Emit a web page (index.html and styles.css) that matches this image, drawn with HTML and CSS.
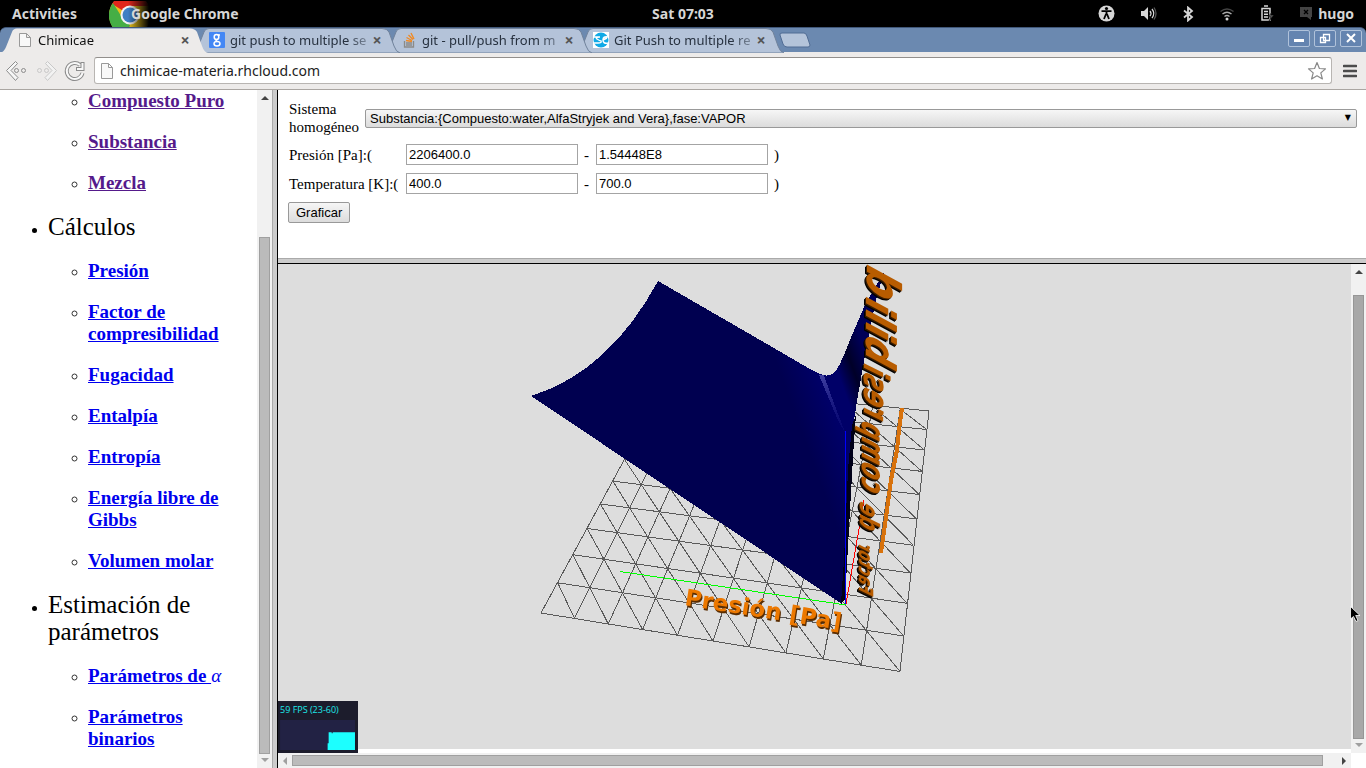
FILE: index.html
```html
<!DOCTYPE html>
<html lang="es">
<head>
<meta charset="utf-8">
<title>Chimicae</title>
<link rel="stylesheet" href="styles.css">
</head>
<body>
<header class="topbar">
  <div class="topbar-left">
    <button class="plain activities">Activities</button>
    <button class="plain app-menu">
      <svg class="app-logo" width="42" height="26" viewBox="0 0 42 26" aria-hidden="true">
        <defs><linearGradient id="fade" x1="0" x2="1"><stop offset=".45" stop-color="#000" stop-opacity="0"/><stop offset=".95" stop-color="#000"/></linearGradient></defs>
        <circle cx="21" cy="14" r="21" fill="#e8c21c"/>
        <path d="M21 14 3 3A21 21 0 0 1 40 5L21 5Z" fill="#e0261c"/>
        <path d="M4 2 14 18 21 24 17 35A21 21 0 0 1 4 2Z" fill="#45ae45"/>
        <circle cx="21" cy="14" r="9.500" fill="#f2f2f2"/><circle cx="21" cy="14" r="7.500" fill="#3f7fc4"/>
        <rect width="42" height="26" fill="url(#fade)"/>
      </svg>
      <span class="app-name">Google Chrome</span>
    </button>
  </div>
  <time class="clock">Sat 07:03</time>
  <div class="status">
    <svg width="17" height="17" viewBox="0 0 17 17" aria-label="Accesibilidad"><circle cx="8.500" cy="8.500" r="8" fill="#d6d6d6"/><circle cx="8.500" cy="3.500" r="1.600" fill="#000"/><path d="M3.500 6.200h10M8.500 6v4M8 9l-2 5M9 9l2 5" stroke="#000" stroke-width="1.800" fill="none"/></svg>
    <svg width="17" height="16" viewBox="0 0 17 16" aria-label="Volumen"><path d="M1 5h3l4-4v13l-4-4H1z" fill="#d6d6d6"/><path d="M10 5q2 2.500 0 5M12 3q3.500 4.500 0 9" stroke="#d6d6d6" stroke-width="1.300" fill="none"/><path d="M14 1.500q4 6 0 12" stroke="#555" stroke-width="1.300" fill="none"/></svg>
    <svg width="12" height="16" viewBox="0 0 12 16" aria-label="Bluetooth"><path d="M2 4.500 10 11l-4 3.500v-13L10 5l-8 6.500" stroke="#d6d6d6" stroke-width="1.800" fill="none"/></svg>
    <svg width="16" height="14" viewBox="0 0 16 14" aria-label="Red"><path d="M1.500 4.500q6.500-5 13 0" stroke="#444" stroke-width="1.500" fill="none"/><path d="M3.500 7q4.500-3.500 9 0M5.500 9.500q2.500-2 5 0" stroke="#aaa" stroke-width="1.500" fill="none"/><circle cx="8" cy="12" r="1.500" fill="#d6d6d6"/></svg>
    <svg width="14" height="17" viewBox="0 0 14 17" aria-label="Batería"><path d="M4 1h4M2 3.500h8V15H2zM4 6.500h4M4 9.200h4M4 12h4" stroke="#d6d6d6" stroke-width="1.500" fill="none"/><path d="m12 7-4 5h3l-2 4 5-6h-3z" fill="#555" stroke="#000" stroke-width=".5"/></svg>
    <button class="plain user"><svg width="14" height="13" viewBox="0 0 14 13" aria-hidden="true"><path d="M1 0h12v10h-1v3l-4-3H1z" fill="#444"/><path d="m5 3 4 4M9 3 5 7" stroke="#000" stroke-width="1.300"/></svg><span>hugo</span></button>
  </div>
</header>

<div class="tabstrip">
  <div class="tabs" role="tablist">
    <div class="tab tab-active" role="tab" aria-selected="true">
      <svg class="tab-shape" width="208" height="25" viewBox="0 0 208 25" aria-hidden="true"><path d="M0 25Q4 24 6 19L12 4Q13 .5 17 .5H190Q195 .5 197 4L202 18Q204 24 208 25Z"/></svg>
      <svg class="favicon" width="16" height="16" viewBox="0 0 16 16" aria-hidden="true"><path d="M2.500 1.500h7l4 4v9h-11zM9.500 1.500v4h4" fill="#f8f8f8" stroke="#999"/></svg>
      <span class="tab-title">Chimicae</span><button class="plain close" aria-label="Cerrar">×</button>
    </div>
    <div class="tab" role="tab">
      <svg class="tab-shape" width="208" height="25" viewBox="0 0 208 25" aria-hidden="true"><path d="M0 25Q4 24 6 19L12 4Q13 .5 17 .5H190Q195 .5 197 4L202 18Q204 24 208 25Z"/></svg>
      <svg class="favicon" width="16" height="16" viewBox="0 0 16 16" aria-hidden="true"><rect width="16" height="16" rx="1" fill="#4387f5"/><g fill="none" stroke="#fff" stroke-width="1.500"><ellipse cx="7.500" cy="5" rx="2.300" ry="2.500"/><path d="M9 3h2M8 7.500q-2 1 0 2"/><ellipse cx="8" cy="11.700" rx="3" ry="2.200"/></g></svg>
      <span class="tab-title">git push to multiple se</span><button class="plain close" aria-label="Cerrar">×</button>
    </div>
    <div class="tab" role="tab">
      <svg class="tab-shape" width="208" height="25" viewBox="0 0 208 25" aria-hidden="true"><path d="M0 25Q4 24 6 19L12 4Q13 .5 17 .5H190Q195 .5 197 4L202 18Q204 24 208 25Z"/></svg>
      <svg class="favicon" width="16" height="16" viewBox="0 0 16 16" aria-hidden="true"><path d="M3.500 9v6h9V9M5 13h6M5 11h6" fill="none" stroke="#8c8a86" stroke-width="1.300"/><path d="m5 8.500 6 1M5.500 5.500l5.500 3M7.500 3l4.500 4.500M10 1l3 6" stroke="#f08a24" stroke-width="1.400"/></svg>
      <span class="tab-title">git - pull/push from m</span><button class="plain close" aria-label="Cerrar">×</button>
    </div>
    <div class="tab" role="tab">
      <svg class="tab-shape" width="208" height="25" viewBox="0 0 208 25" aria-hidden="true"><path d="M0 25Q4 24 6 19L12 4Q13 .5 17 .5H190Q195 .5 197 4L202 18Q204 24 208 25Z"/></svg>
      <svg class="favicon" width="16" height="16" viewBox="0 0 16 16" aria-hidden="true"><rect width="16" height="16" fill="#fff"/><circle cx="8" cy="8" r="7.500" fill="#10a9e6"/><path d="M1 5h6q-5 0-3 2 3 2 4 2 1 2-3 2H1M15 5q-5-1-5 3t5 3M10 8l4-2" stroke="#fff" stroke-width="1.500" fill="none"/></svg>
      <span class="tab-title">Git Push to multiple re</span><button class="plain close" aria-label="Cerrar">×</button>
    </div>
    <button class="plain new-tab" aria-label="Nueva pestaña"><svg width="32" height="16" viewBox="0 0 32 16"><path d="M1 3Q.5 1 3 1H25Q27 1 28 4L31 13Q31 15 29 15H8Q5 15 4 12Z" fill="#b4c4da" stroke="#506c94"/></svg></button>
  </div>
  <div class="window-buttons">
    <button aria-label="Minimizar"><svg width="20" height="15" viewBox="0 0 20 15"><path d="M5 9.500h10" stroke="#fff" stroke-width="3"/></svg></button>
    <button aria-label="Restaurar"><svg width="20" height="15" viewBox="0 0 20 15"><path d="M8.500 3.500h6v6h-6zM5.500 6.500h5v5h-5z" fill="none" stroke="#fff" stroke-width="1.300"/></svg></button>
    <button aria-label="Cerrar ventana"><svg width="20" height="15" viewBox="0 0 20 15"><path d="m6 3 8 8M14 3l-8 8" stroke="#fff" stroke-width="2"/></svg></button>
  </div>
</div>

<div class="toolbar">
  <button class="plain" aria-label="Atrás"><svg width="22" height="22" viewBox="0 0 22 22" fill="none" stroke="#8c8c8c"><path d="m9.500 1.500 2 2L5 10.500l7 7-2.500 3L.5 10.500z" fill="#f6f6f6"/><circle cx="10.500" cy="10.500" r="2"/><circle cx="17.500" cy="10.500" r="2"/></svg></button>
  <button class="plain" aria-label="Adelante"><svg width="22" height="22" viewBox="0 0 22 22" fill="none" stroke="#c8c8c8"><path d="m12.500 1.500-2 2 6.500 7-7 7 2.500 3 9-10z" fill="#f2f2f2"/><circle cx="11.500" cy="10.500" r="2"/><circle cx="4.500" cy="10.500" r="2"/></svg></button>
  <button class="plain reload" aria-label="Recargar"><svg width="22" height="22" viewBox="0 0 22 22"><path d="M16 5A8 8 0 1 0 18.500 13M18.500 2v7H12" fill="none" stroke="#8c8c8c" stroke-width="4"/><path d="M16 5A8 8 0 1 0 18.500 13M18.500 3v6H13" fill="none" stroke="#f8f8f8" stroke-width="2"/></svg></button>
  <div class="omnibox">
    <svg width="16" height="16" viewBox="0 0 16 16" aria-hidden="true"><path d="M2.500 .5h7l4 4v11h-11zM9.500 .5v4h4" fill="#f8f8f8" stroke="#999"/></svg>
    <input class="url" type="text" aria-label="Dirección" value="chimicae-materia.rhcloud.com">
    <button class="plain" aria-label="Marcador"><svg width="20" height="20" viewBox="0 0 20 20"><path d="m10 1.500 2.400 6 6.100.4-4.700 4 1.600 6.100L10 14.800 4.600 18l1.600-6.100-4.700-4 6.100-.4z" fill="#fff" stroke="#888" stroke-width="1.200" stroke-linejoin="round"/></svg></button>
  </div>
  <button class="plain menu" aria-label="Menú"><svg width="14" height="14" viewBox="0 0 14 14"><path d="M1 2h12M1 7h12M1 12h12" stroke="#4c4c4c" stroke-width="2.600" stroke-linecap="round"/></svg></button>
</div>

<main class="frames">
  <nav class="sidebar">
    <ul class="sections">
      <li>
        <ul class="links">
          <li><a class="visited" href="#compuesto">Compuesto Puro</a></li>
          <li><a class="visited" href="#substancia">Substancia</a></li>
          <li><a class="visited" href="#mezcla">Mezcla</a></li>
        </ul>
      </li>
      <li>
        <h2>Cálculos</h2>
        <ul class="links">
          <li><a href="#presion">Presión</a></li>
          <li><a href="#factor">Factor de compresibilidad</a></li>
          <li><a href="#fugacidad">Fugacidad</a></li>
          <li><a href="#entalpia">Entalpía</a></li>
          <li><a href="#entropia">Entropía</a></li>
          <li><a href="#gibbs">Energía libre de Gibbs</a></li>
          <li><a href="#volumen">Volumen molar</a></li>
        </ul>
      </li>
      <li>
        <h2>Estimación de parámetros</h2>
        <ul class="links">
          <li><a href="#alfa">Parámetros de <i>α</i></a></li>
          <li><a href="#binarios">Parámetros binarios</a></li>
        </ul>
      </li>
    </ul>
  </nav>
  <div class="vscroll" aria-hidden="true"><span class="arrow up dark"></span><div class="track"><span class="space-nav"></span><span class="thumb thumb-nav"></span></div><span class="arrow down"></span></div>
  <div class="divider-v"></div>
  <section class="work">
    <form class="query">
      <div class="row row-system">
        <label for="sistema">Sistema homogéneo</label>
        <span class="select-wrap"><select id="sistema"><option>Substancia:{Compuesto:water,AlfaStryjek and Vera},fase:VAPOR</option></select></span>
      </div>
      <div class="row row-range">
        <label for="p1">Presión [Pa]:(</label><input id="p1" type="text" value="2206400.0"><label for="p2">-</label><input id="p2" type="text" value="1.54448E8"><span>)</span>
      </div>
      <div class="row row-range">
        <label for="t1">Temperatura [K]:(</label><input id="t1" type="text" value="400.0"><label for="t2">-</label><input id="t2" type="text" value="700.0"><span>)</span>
      </div>
      <button class="submit" type="button">Graficar</button>
    </form>
    <div class="divider-h"></div>
    <div class="viewer">
      <div class="canvas">
        <svg class="plot" viewBox="278 264 1073 485" preserveAspectRatio="xMinYMin meet" role="img" aria-label="Superficie del factor de compresibilidad">
          <defs>
            <linearGradient id="body" gradientUnits="userSpaceOnUse" x1="790" y1="400" x2="872" y2="370"><stop offset="0" stop-color="#000050"/><stop offset=".42" stop-color="#000068"/><stop offset=".62" stop-color="#000068"/><stop offset=".8" stop-color="#000028"/><stop offset="1" stop-color="#000058"/></linearGradient>
            <linearGradient id="shine" gradientUnits="userSpaceOnUse" x1="822" y1="376" x2="845" y2="436"><stop offset="0" stop-color="#4040a0"/><stop offset="1" stop-color="#101080" stop-opacity=".2"/></linearGradient>
          </defs>
          <g class="grid">
            <path d="M541 613 900 671.500M557.700 582.800 903.500 636M572.900 554.700 907 603.300M587.100 528.500 910.300 573M600.400 504 913.500 545.300M612.800 481.100 916.500 519M624.500 459.500 919.300 494.500M635.500 439.200 922 471.400M645.900 420.100 924.400 450M655.700 402 926.700 429.500M664.900 384.900 929 411"/>
            <path d="M541 613 664.900 384.900M574.500 618.400 689.800 387.500M608.300 623.900 715 390.100M642.600 629.500 740.500 392.700M677.500 635.200 766.300 395.400M713 641 792.400 398M749.100 646.900 818.900 400.800M785.800 652.900 845.700 403.500M823.200 658.900 872.800 406.300M861.300 665.100 900.200 409.100M900 671.500 929 411"/>
            <path d="M557.700 582.800 574.500 618.400M572.900 554.700 608.300 623.900M587.100 528.500 642.600 629.500M600.400 504 677.500 635.200M612.800 481.100 713 641M624.500 459.500 749.100 646.900M635.500 439.200 785.800 652.900M645.900 420.100 823.200 658.900M655.700 402 861.300 665.100M664.900 384.900 900 671.500M689.800 387.500 903.500 636M715 390.100 907 603.300M740.500 392.700 910.300 573M766.300 395.400 913.500 545.300M792.400 398 916.500 519M818.900 400.800 919.300 494.500M845.700 403.500 922 471.400M872.800 406.300 924.400 450M900.200 409.100 926.700 429.500"/>
          </g>
          <path d="M846 604 864 500" stroke="#f00"/>
          <path d="M531 396C585 379 626 340 658 281L767 344 803 365Q820 375 826 375.500 832 376 837 369 841 363 850 340L865 305 884 272 876 300 866 350 858 395 854 420 852 470 848 535 842 604Z" fill="url(#body)"/>
          <path d="M856 415 852 425 848 470 844 560 841 603 845 600 850 510 854 440Z" fill="#000018"/>
          <path d="M819 375 824 375.500 832 398 846 435 837 418Z" fill="url(#shine)"/>
          <path d="M620 571.500 846 605" stroke="#0f0"/>
          <path d="M845.500 431V604" stroke="#00f"/>
          <path d="M902 408 899 430 897 450 891 480 887 510 884 532 881 553" fill="none" stroke="#d8720c" stroke-width="4"/>
          <g class="axis-z">
            <text class="z1" transform="matrix(0 -1 -1.400 -.7 859 591)">Factor</text>
            <text class="z2" transform="matrix(0 -1 -1.400 -.7 860 526)">de</text>
            <text class="z3" transform="matrix(0 -1 -1.400 -.7 862 488)">comp</text>
            <text class="z4" transform="matrix(0 -1 -1.400 -.7 864 414)">resi</text>
            <text class="z5" transform="matrix(0 -1 -1.100 -.6 866 358)">bili</text>
            <text class="z6" transform="matrix(0 -1 -1.100 -.6 867 291)">d</text>
          </g>
          <g class="axis-x"><text transform="translate(684 605) rotate(9)">Presión [Pa]</text></g>
        </svg>
        <div class="stats"><span>59 FPS (23-60)</span><svg viewBox="0 0 74 30" aria-hidden="true"><path d="M0 0h74v30H0z" fill="#222244"/><path d="M47 30v-7h1V12h3v1h1v-1h22v18z" fill="#1cffff"/></svg></div>
      </div>
      <div class="vscroll" aria-hidden="true"><span class="arrow up dark"></span><div class="track"><span class="space-view"></span><span class="thumb thumb-view"></span></div><span class="arrow down"></span></div>
      <div class="hscroll" aria-hidden="true"><span class="arrow left"></span><div class="track"><span class="thumb thumb-h"></span><span class="space-h"></span></div><span class="arrow right dark"></span></div>
    </div>
  </section>
</main>
<svg class="pointer" width="12" height="18" viewBox="0 0 12 18" aria-hidden="true"><path d="M.5 .5V13l3-2.500 2.500 5 2-1-2.300-5H10z" fill="#000" stroke="#fff" stroke-width=".8"/></svg>
</body>
</html>
```
FILE: styles.css
```css
* { box-sizing: border-box; }
body {
  margin: 0;
  height: 100vh;
  display: flex;
  flex-direction: column;
  overflow: hidden;
  background: #000;
  font-family: "Liberation Serif", serif;
  color: #000;
}
svg { display: block; flex: none; }
.plain { border: 0; padding: 0; background: none; font: inherit; color: inherit; }

/* desktop bar */
.topbar {
  height: 27px;
  flex: none;
  display: grid;
  grid-template-columns: 1fr auto 1fr;
  align-items: center;
  color: #d6d6d6;
  font: 700 14px/26px "Noto Sans", sans-serif;
}
.topbar-left { display: flex; gap: 32px; padding-left: 12px; }
.app-menu { display: flex; }
.app-name { margin-left: -20px; z-index: 1; }
.status { display: flex; justify-content: flex-end; align-items: center; gap: 25px; padding-right: 12px; }
.user { display: flex; align-items: center; gap: 5px; }

/* browser chrome */
.tabstrip {
  height: 25px;
  flex: none;
  display: flex;
  justify-content: space-between;
  background: #6b89b0;
  border-top: 1px solid #41587a;
  border-radius: 6px 6px 0 0;
  font: 13px/22px "Noto Sans", sans-serif;
}
.tabs { display: flex; }
.tab {
  position: relative;
  width: 192px;
  height: 24px;
  padding-left: 17px;
  display: flex;
  align-items: center;
  gap: 4px;
  color: #27313f;
  z-index: 1;
}
.tab:nth-child(1) { z-index: 4; }
.tab:nth-child(2) { z-index: 3; }
.tab:nth-child(3) { z-index: 2; }
.tab-shape { position: absolute; left: 0; top: 0; z-index: -1; fill: #b4c3d9; stroke: #71839c; }
.tab-active { color: #111; }
.tab-active .tab-shape { fill: #edebea; stroke: none; }
.tab-title {
  flex: none;
  width: 137px;
  padding-left: 1px;
  white-space: nowrap;
  -webkit-mask-image: linear-gradient(90deg, #000 86%, transparent 110%);
  mask-image: linear-gradient(90deg, #000 86%, transparent 110%);
}
.close { width: 16px; font: bold 16px/20px "Noto Sans", sans-serif; color: #555; }
.new-tab { align-self: center; margin-left: 11px; }
.window-buttons { display: flex; gap: 4px; padding: 2px 4px 0 0; }
.window-buttons button { width: 22px; height: 17px; padding: 0; border: 1px solid #b0c2da; border-radius: 2px; background: #6484b0; }
.toolbar {
  height: 38px;
  flex: none;
  display: flex;
  align-items: center;
  gap: 7px;
  padding: 0 9px 0 6px;
  background: #edebea;
  border-bottom: 1px solid #aaa6a2;
}
.reload { margin-right: 1px; }
.omnibox {
  flex: 1;
  height: 27px;
  display: flex;
  align-items: center;
  gap: 5px;
  padding: 0 4px;
  background: #fff;
  border: 1px solid #b8b5b2;
  border-top-color: #928f8c;
  border-radius: 3px;
}
.url { flex: 1; border: 0; padding: 0; outline: 0; font: 14px/22px "Noto Sans", sans-serif; color: #222; }
.menu { margin-left: 4px; }

/* frames */
.frames { flex: 1; min-height: 0; display: flex; background: #fff; }
.sidebar { width: 257px; flex: none; overflow: hidden; padding: 0 8px; }
.sections { margin: 0; padding-left: 40px; }
.sections > li:first-child { list-style: none; }
.sections h2 { margin: 19px 0 20px; font-size: 25px; line-height: 27px; font-weight: 400; }
.links { margin: 0; padding-left: 40px; list-style: circle; font-size: 19px; line-height: 22px; }
.links li { margin-bottom: 19px; }
.links li::marker { font-size: 16px; color: #333; }
.links a { font-weight: 700; color: #00e; }
.links .visited { color: #551a8b; }
.links i { font-weight: 400; display: inline-block; }
.divider-v { width: 6px; flex: none; background: #ccc; border-left: 1px solid #aaa; border-right: 1px solid #000; }
.divider-h { height: 6px; flex: none; background: #ccc; border-top: 1px solid #aaa; border-bottom: 1px solid #000; }
.work { flex: 1; min-width: 0; display: flex; flex-direction: column; }

/* form */
.query {
  height: 168px;
  flex: none;
  display: flex;
  flex-direction: column;
  align-items: stretch;
  gap: 8px;
  padding: 10px 9px 0 11px;
  font-size: 15px;
  line-height: 18px;
}
.row { display: grid; align-items: center; }
.row-system { grid-template-columns: 76px 1fr; }
.row-range { grid-template-columns: 117px 172px 18px 172px 20px; }
.row-range label + input + label, .row-range span { padding-left: 6px; }
.query input { width: 100%; height: 21px; padding: 0 2px; border: 1px solid #a4a4a4; font: 13px "Liberation Sans", sans-serif; }
.select-wrap { position: relative; display: flex; }
.select-wrap::after { content: "▼"; position: absolute; right: 6px; top: 0; font: 8px/18px "DejaVu Sans", sans-serif; pointer-events: none; }
.query select {
  appearance: none;
  width: 100%;
  height: 19px;
  padding: 0 4px;
  border: 1px solid #999;
  border-radius: 2px;
  background: linear-gradient(#f6f6f6, #dcdcdc);
  font: 13px "Liberation Sans", sans-serif;
  color: #000;
}
.submit {
  align-self: flex-start;
  height: 21px;
  margin-left: -1px;
  padding: 0 7px;
  border: 1px solid #999;
  border-radius: 2px;
  background: linear-gradient(#f6f6f6, #dcdcdc);
  font: 13px "Liberation Sans", sans-serif;
}

/* 3D view */
.viewer { flex: 1; min-height: 0; display: grid; grid-template: minmax(0, 1fr) 15px / minmax(0, 1fr) 15px; }
.canvas { position: relative; min-height: 0; background: #ddd; border-bottom: 4px solid #fff; }
.plot { width: 100%; height: 100%; shape-rendering: crispEdges; }
.grid { fill: none; stroke: #5a5a5a; stroke-width: 1; }
.axis-z { font-family: "DejaVu Sans", sans-serif; font-weight: 700; fill: #b85c00; filter: drop-shadow(-1px 1px 0 #3a1c00) drop-shadow(-1px 1px 0 #000); }
.z1 { font-size: 14px; }
.z2 { font-size: 19px; }
.z3 { font-size: 23px; }
.z4 { font-size: 25px; }
.z5 { font-size: 37px; }
.z6 { font-size: 42px; }
.axis-x { font: 700 23px "DejaVu Sans", sans-serif; fill: #ec7800; filter: drop-shadow(1px 2px 0 #5a2c00); }
.stats {
  position: absolute;
  left: 0;
  bottom: -4px;
  width: 80px;
  height: 52px;
  display: flex;
  flex-direction: column;
  justify-content: space-between;
  padding: 3px 3px 3px 2px;
  background: #1c1c2c;
  color: #1ce8e8;
  font: 9px/12px "Open Sans", sans-serif;
  white-space: nowrap;
}

/* scrollbars */
.vscroll, .hscroll { background: #f1f1f1; display: flex; align-items: center; }
.vscroll { width: 15px; flex: none; flex-direction: column; padding: 6px 0; }
.hscroll { height: 15px; grid-column: 1; padding: 0 5px; }
.track { flex: 1; display: flex; }
.vscroll .track { flex-direction: column; width: 11px; margin: 4px 0; }
.hscroll .track { height: 11px; margin: 0 5px; }
.thumb { background: #bbb; border: 1px solid #a0a0a0; }
.space-nav { flex: 133; }
.thumb-nav { flex: 517; }
.space-view { flex: 17; }
.thumb-view { flex: 448; background: #a8a8a8; border-color: #969696; }
.thumb-h { flex: 1029; }
.space-h { flex: 14; }
.arrow { border: 4px solid transparent; color: #a0a0a0; }
.dark { color: #444; }
.up { border-top: 0; border-bottom-color: currentColor; }
.down { border-bottom: 0; border-top-color: currentColor; }
.left { border-left: 0; border-right-color: currentColor; }
.right { border-right: 0; border-left-color: currentColor; }
.pointer { position: absolute; left: 1350px; top: 606px; z-index: 5; }
```
